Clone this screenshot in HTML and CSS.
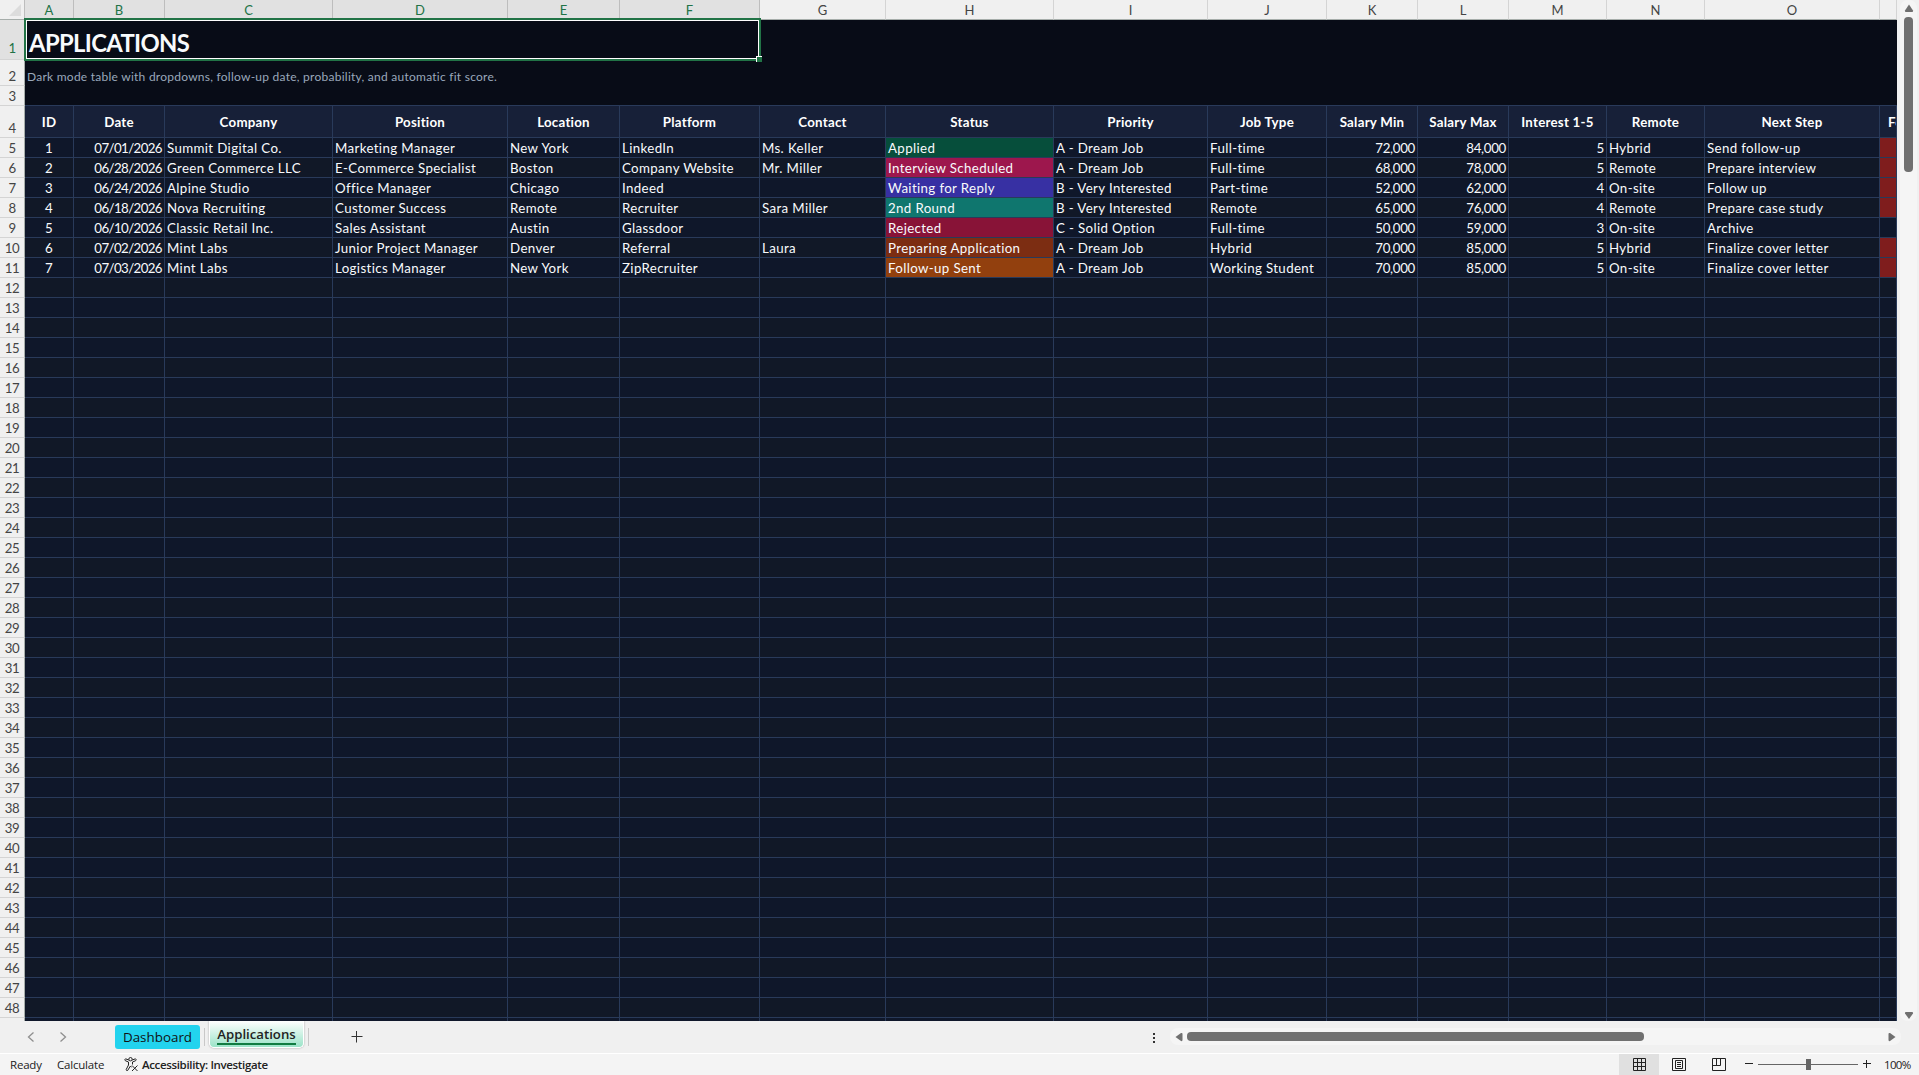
FILE: index.html
```html
<!DOCTYPE html>
<html lang="en">
<head>
    <meta charset="utf-8">
    <title>Applications</title>
    <link rel="stylesheet" href="styles.css">
</head>
<body>

<div id="main">
    <div id="top">
        <table id="sheet">
            <colgroup id="cols"></colgroup>
            <thead id="letters"></thead>
            <tbody id="rows"></tbody>
        </table>
        <div class="selection"><span class="handle"></span></div>
        <!--Vertical scrollbar-->
        <div class="vbar">
            <svg width="10" height="9" viewBox="0 0 10 9"><path d="M5 0.5L9 6.5Q9.400 8 8 8H2Q0.600 8 1 6.500Z"/></svg>
            <div class="thumb"></div>
            <svg class="down" width="10" height="9" viewBox="0 0 10 9"><path d="M5 8L9 2.500Q9.400 1 8 1H2Q0.600 1 1 2.500Z"/></svg>
        </div>
    </div>

    <!--Sheet tabs-->
    <div id="tabs">
        <svg class="prev" width="8" height="12" viewBox="0 0 8 12"><path d="M6.500 1.500L1.500 6L6.500 10.500"/></svg>
        <svg class="next" width="8" height="12" viewBox="0 0 8 12"><path d="M1.500 1.500L6.500 6L1.500 10.500"/></svg>
        <div class="tab">Dashboard</div>
        <div class="line"></div>
        <div class="tab active"><span>Applications</span></div>
        <div class="line"></div>
        <svg class="plus" width="12" height="12" viewBox="0 0 12 12"><path d="M0.500 5.500H11.500M5.500 0V11.500"/></svg>
        <div class="dots"><i></i><i></i><i></i></div>
        <div class="hbar">
            <svg width="8" height="10" viewBox="0 0 8 10"><path d="M0.500 5L6 1Q7.500 0.500 7.500 2V8Q7.500 9.500 6 9Z"/></svg>
            <div class="thumb"></div>
            <svg class="right" width="8" height="10" viewBox="0 0 8 10"><path d="M7.500 5L2 1Q0.500 0.500 0.500 2V8Q0.500 9.500 2 9Z"/></svg>
        </div>
    </div>

    <!--Status bar-->
    <div id="status">
        <span class="ready">Ready</span>
        <span class="calc">Calculate</span>
        <svg class="acc" width="15" height="15" viewBox="0 0 15 15">
            <circle cx="6.500" cy="2.200" r="1.700"/>
            <path d="M4.800 3L1.500 1.800Q0.300 2.600 1.300 3.700L4.500 5V8L2.200 12.500Q2.300 14 3.600 13.500L6.500 9L7.500 10.300M8.200 3L11.500 1.800Q12.700 2.600 11.700 3.700L8.500 5V7.500M8 8.500L13.500 14M13.500 8.500L8 14"/>
        </svg>
        <span class="access">Accessibility: Investigate</span>
        <div class="view on">
            <svg width="13" height="13" viewBox="0 0 13 13"><path d="M0.500 0.500H12.500V12.500H0.500ZM4.500 0.500V12.500M8.500 0.500V12.500M0.500 4.500H12.500M0.500 8.500H12.500"/></svg>
        </div>
        <div class="view">
            <svg width="14" height="13" viewBox="0 0 14 13"><path d="M0.500 0.500H13.500V12.500H0.500ZM3.500 2.500H10.500V10.500H3.500ZM5 4.500H9M5 6.500H9M5 8.500H9"/></svg>
        </div>
        <div class="view">
            <svg width="14" height="13" viewBox="0 0 14 13"><path d="M0.500 0.500H13.500V12.500H0.500ZM4.500 0.500V7.500M8.500 0.500V7.500M0.500 7.500H8.500"/></svg>
        </div>
        <svg class="minus" width="8" height="9" viewBox="0 0 8 9"><path d="M0 3.500H8"/></svg>
        <div class="slider"><div class="knob"></div></div>
        <svg class="zplus" width="8" height="9" viewBox="0 0 8 9"><path d="M0 3.500H8M3.500 0V8"/></svg>
        <span class="percent">100%</span>
    </div>
</div>

<script src="sheet.js"></script>
</body>
</html>
```
FILE: styles.css
```css
*{ margin: 0; padding: 0; box-sizing: border-box;}
body{ width: 1919px; height: 1075px; overflow: hidden; background: #f0f0f0; font-family: Lato, "Liberation Sans", sans-serif;}
svg{ display: block; flex: none;}

#main{ display: flex; flex-direction: column; height: 1075px;}
#top{ position: relative; display: flex; height: 1021px; overflow: hidden;}

/*grid*/
#sheet{ table-layout: fixed; border-collapse: separate; border-spacing: 0; width: 1897px; flex: none; align-self: flex-start;}
#sheet tr{ height: 20px;}
#sheet th, #sheet td{ overflow: hidden; white-space: nowrap; line-height: 18px;}
#letters th{ height: 20px; padding-top: 1px; background: #f0f0f0; border-right: 1px solid #d4d4d4; border-bottom: 1px solid #a6adaa; color: #444; font-size: 13px; font-weight: 400;}
#letters th.sel{ background: #e1e1e1; color: #217346; border-right-color: #bdbdbd;}
#letters .corner{ border-right-color: #bdbdbd;}
#letters .corner svg{ margin-left: 9px;}
#letters .corner path{ fill: #dcdcdc;}
#rows th{ background: #f0f0f0; border-right: 1px solid #a6adaa; border-bottom: 1px solid #d4d4d4; color: #444; font-size: 13.2px; font-weight: 400; letter-spacing: -0.5px; vertical-align: bottom;}
#rows tr.r1 th{ padding-bottom: 2px; background: #e1e1e1; color: #217346;}
#rows td{ height: 20px; padding: 0 2px; border-right: 1px solid #293a5a; border-bottom: 1px solid #293a5a; background: #0f172a; color: #f8fafc; font-size: 13.3px; letter-spacing: 0.36px;}
#rows tr:nth-child(even) td{ background: #111827;}
#rows tr.r1 td, #rows tr.r2 td, #rows tr.r3 td{ background: #080c17; border: none;}
#rows tr.r3 td{ border-bottom: 1px solid #293a5a;}
#rows tr.r1{ height: 40px;}
#rows tr.r2{ height: 26px;}
#rows tr.r4{ height: 32px;}
#rows tr.r1 td{ height: 40px; padding: 6px 0 0 4px; font-size: 23.8px; font-weight: 700; line-height: 34px; letter-spacing: -0.65px; vertical-align: top;}
#rows tr.r2 td{ padding-top: 8px; color: #9aa8bb; font-size: 12px; letter-spacing: 0.25px;}
#rows tr.r4 td{ background: #172038; color: #fff; font-weight: 700; letter-spacing: 0.25px; text-align: center;}
#rows tr.r4 td.cut{ padding-left: 8px; text-align: left;}
#rows td.num{ text-align: right; letter-spacing: -0.3px;}
#rows td.date{ text-align: right; letter-spacing: -0.6px;}
#rows td.mid{ text-align: center;}

/*status colors*/
#rows tr td.applied{ background: #064e3b;}
#rows tr:nth-child(n) td.interview{ background: #9d174d;}
#rows tr td.waiting{ background: #3730a3;}
#rows tr:nth-child(n) td.second{ background: #0f766e;}
#rows tr td.rejected{ background: #881337;}
#rows tr:nth-child(n) td.preparing{ background: #7c2d12;}
#rows tr td.followup{ background: #92400e;}
#rows tr:nth-child(n) td.due{ background: #7f1d1d;}

/*selected range A1:F1*/
.selection{ position: absolute; left: 24px; top: 18px; width: 737px; height: 43px; border: 2px solid #217346; box-shadow: inset 0 0 0 1px #fff;}
.handle{ position: absolute; right: -3px; bottom: -3px; width: 6px; height: 6px; background: #217346; border-left: 1px solid #fff; border-top: 1px solid #fff;}

/*scrollbars*/
.vbar{ display: flex; flex-direction: column; align-items: center; width: 17px; margin-left: 3px; padding-top: 4px; background: #f5f5f5; border-radius: 8px;}
.vbar path, .hbar path{ fill: #707070;}
.vbar .thumb{ width: 9px; height: 155px; margin-top: 4px; border-radius: 4px; background: #707070;}
.vbar .down{ margin-top: auto; margin-bottom: 1px;}
.hbar{ display: flex; align-items: center; width: 731px; height: 17px; margin-top: 7px; padding: 0 5px; border-radius: 8px; background: #f5f5f5;}
.hbar .thumb{ width: 457px; height: 9px; margin-left: 4px; border-radius: 4px; background: #707070;}
.hbar .right{ margin-left: auto;}

#tabs{ display: flex; align-items: flex-start; height: 32px; background: #f0f0f0; font-family: "Open Sans", sans-serif;}
#tabs .prev, #tabs .next{ fill: none; stroke: #8f8f8f; stroke-width: 1.3; margin-top: 10px;}
#tabs .prev{ margin-left: 27px;}
#tabs .next{ margin-left: 24px;}
.tab{ width: 85px; height: 24px; margin: 4px 0 0 48px; border-radius: 3px; background: #22d3ee; color: #111; font-size: 13.4px; line-height: 24px; text-align: center;}
.tab.active{ width: 95px; height: 27px; margin: 0 0 0 4px; border: 1px solid #fff; border-top: none; border-radius: 0 0 5px 5px; background: linear-gradient(#fff, #9be3c8); box-shadow: 0 0 2px #999; color: #222; font-size: 13.200px; font-weight: 600; line-height: 26px;}
.tab.active span{ display: inline-block; height: 24px; border-bottom: 2px solid #107c41;}
#tabs .line{ width: 1px; height: 18px; margin: 7px 0 0 4px; background: #c8c8c8;}
#tabs .plus{ margin: 10px 0 0 42px; fill: none; stroke: #333;}
.dots{ margin: 12px 15px 0 790px;}
.dots i{ display: block; width: 2px; height: 2px; margin-bottom: 2px; background: #333;}

#status{ display: flex; align-items: center; height: 22px; border-top: 1px solid #fff; background: #f4f4f4; color: #222; font: 11.5px "Open Sans", sans-serif;}
#status span{ white-space: nowrap;}
#status svg{ fill: none; stroke: #222;}
#status .ready{ width: 47px; margin-left: 10px; letter-spacing: -0.2px;}
#status .calc{ width: 67px; letter-spacing: -0.2px;}
#status .access{ margin: 0 auto 0 3px; font-weight: 600; letter-spacing: -0.35px;}
.view{ display: flex; justify-content: center; align-items: center; flex: none; width: 40px; height: 21px;}
.view.on{ background: #e0e0e0;}
#status .minus{ margin-left: 6px;}
.slider{ flex: none; width: 100px; height: 1px; margin: 0 5px; background: #666;}
.knob{ width: 5px; height: 11px; margin: -5px 0 0 48px; background: #666;}
#status .percent{ width: 35px; margin-left: 13px; letter-spacing: -0.7px;}
```
FILE: sheet.js
```javascript
//column letter and width, the last one is cut by the window
var cols = [
    ['A', 49], ['B', 91], ['C', 168], ['D', 175], ['E', 112], ['F', 140], ['G', 126], ['H', 168],
    ['I', 154], ['J', 119], ['K', 91], ['L', 91], ['M', 98], ['N', 98], ['O', 175], ['', 17]
];
var heads = ['ID', 'Date', 'Company', 'Position', 'Location', 'Platform', 'Contact', 'Status', 'Priority',
    'Job Type', 'Salary Min', 'Salary Max', 'Interest 1-5', 'Remote', 'Next Step', 'Fo'];
var data = [
    ['1', '07/01/2026', 'Summit Digital Co.', 'Marketing Manager', 'New York', 'LinkedIn', 'Ms. Keller', 'Applied', 'A - Dream Job', 'Full-time', '72,000', '84,000', '5', 'Hybrid', 'Send follow-up'],
    ['2', '06/28/2026', 'Green Commerce LLC', 'E-Commerce Specialist', 'Boston', 'Company Website', 'Mr. Miller', 'Interview Scheduled', 'A - Dream Job', 'Full-time', '68,000', '78,000', '5', 'Remote', 'Prepare interview'],
    ['3', '06/24/2026', 'Alpine Studio', 'Office Manager', 'Chicago', 'Indeed', '', 'Waiting for Reply', 'B - Very Interested', 'Part-time', '52,000', '62,000', '4', 'On-site', 'Follow up'],
    ['4', '06/18/2026', 'Nova Recruiting', 'Customer Success', 'Remote', 'Recruiter', 'Sara Miller', '2nd Round', 'B - Very Interested', 'Remote', '65,000', '76,000', '4', 'Remote', 'Prepare case study'],
    ['5', '06/10/2026', 'Classic Retail Inc.', 'Sales Assistant', 'Austin', 'Glassdoor', '', 'Rejected', 'C - Solid Option', 'Full-time', '50,000', '59,000', '3', 'On-site', 'Archive'],
    ['6', '07/02/2026', 'Mint Labs', 'Junior Project Manager', 'Denver', 'Referral', 'Laura', 'Preparing Application', 'A - Dream Job', 'Hybrid', '70,000', '85,000', '5', 'Hybrid', 'Finalize cover letter'],
    ['7', '07/03/2026', 'Mint Labs', 'Logistics Manager', 'New York', 'ZipRecruiter', '', 'Follow-up Sent', 'A - Dream Job', 'Working Student', '70,000', '85,000', '5', 'On-site', 'Finalize cover letter']
];
var statusClass = ['applied', 'interview', 'waiting', 'second', 'rejected', 'preparing', 'followup'];

var colHtml = '<col style="width:25px">';
var letterHtml = '<tr><th class="corner"><svg width="12" height="12"><path d="M12 0V12H0Z"/></svg></th>';
for (var i = 0; i < cols.length; i++) {
    colHtml += '<col style="width:' + cols[i][1] + 'px">';
    letterHtml += '<th' + (i < 6 ? ' class="sel"' : '') + '>' + cols[i][0] + '</th>';
}
document.getElementById('cols').innerHTML = colHtml;
document.getElementById('letters').innerHTML = letterHtml + '</tr>';

function cell(row, c) {
    var text = '', cls = '';
    if (row == 4) {
        text = heads[c];
        if (c == 15) cls = 'cut';
    }
    if (row > 4 && row < 12) {
        text = data[row - 5][c] || '';
        if (c == 0) cls = 'mid';
        if (c == 1) cls = 'date';
        if (c > 9 && c < 13) cls = 'num';
        if (c == 7) cls = statusClass[row - 5];
        if (c == 15 && row != 9) cls = 'due';
    }
    return '<td class="' + cls + '">' + text + '</td>';
}

var html = '';
for (var r = 1; r <= 49; r++) {
    html += '<tr class="r' + r + '"><th>' + (r < 49 ? r : '') + '</th>';
    if (r == 1) html += '<td colspan="16">APPLICATIONS</td>';
    else if (r == 2) html += '<td colspan="16">Dark mode table with dropdowns, follow-up date, probability, and automatic fit score.</td>';
    else if (r == 3) html += '<td colspan="16"></td>';
    else for (var c = 0; c < cols.length; c++) html += cell(r, c);
    html += '</tr>';
}
document.getElementById('rows').innerHTML = html;
```
